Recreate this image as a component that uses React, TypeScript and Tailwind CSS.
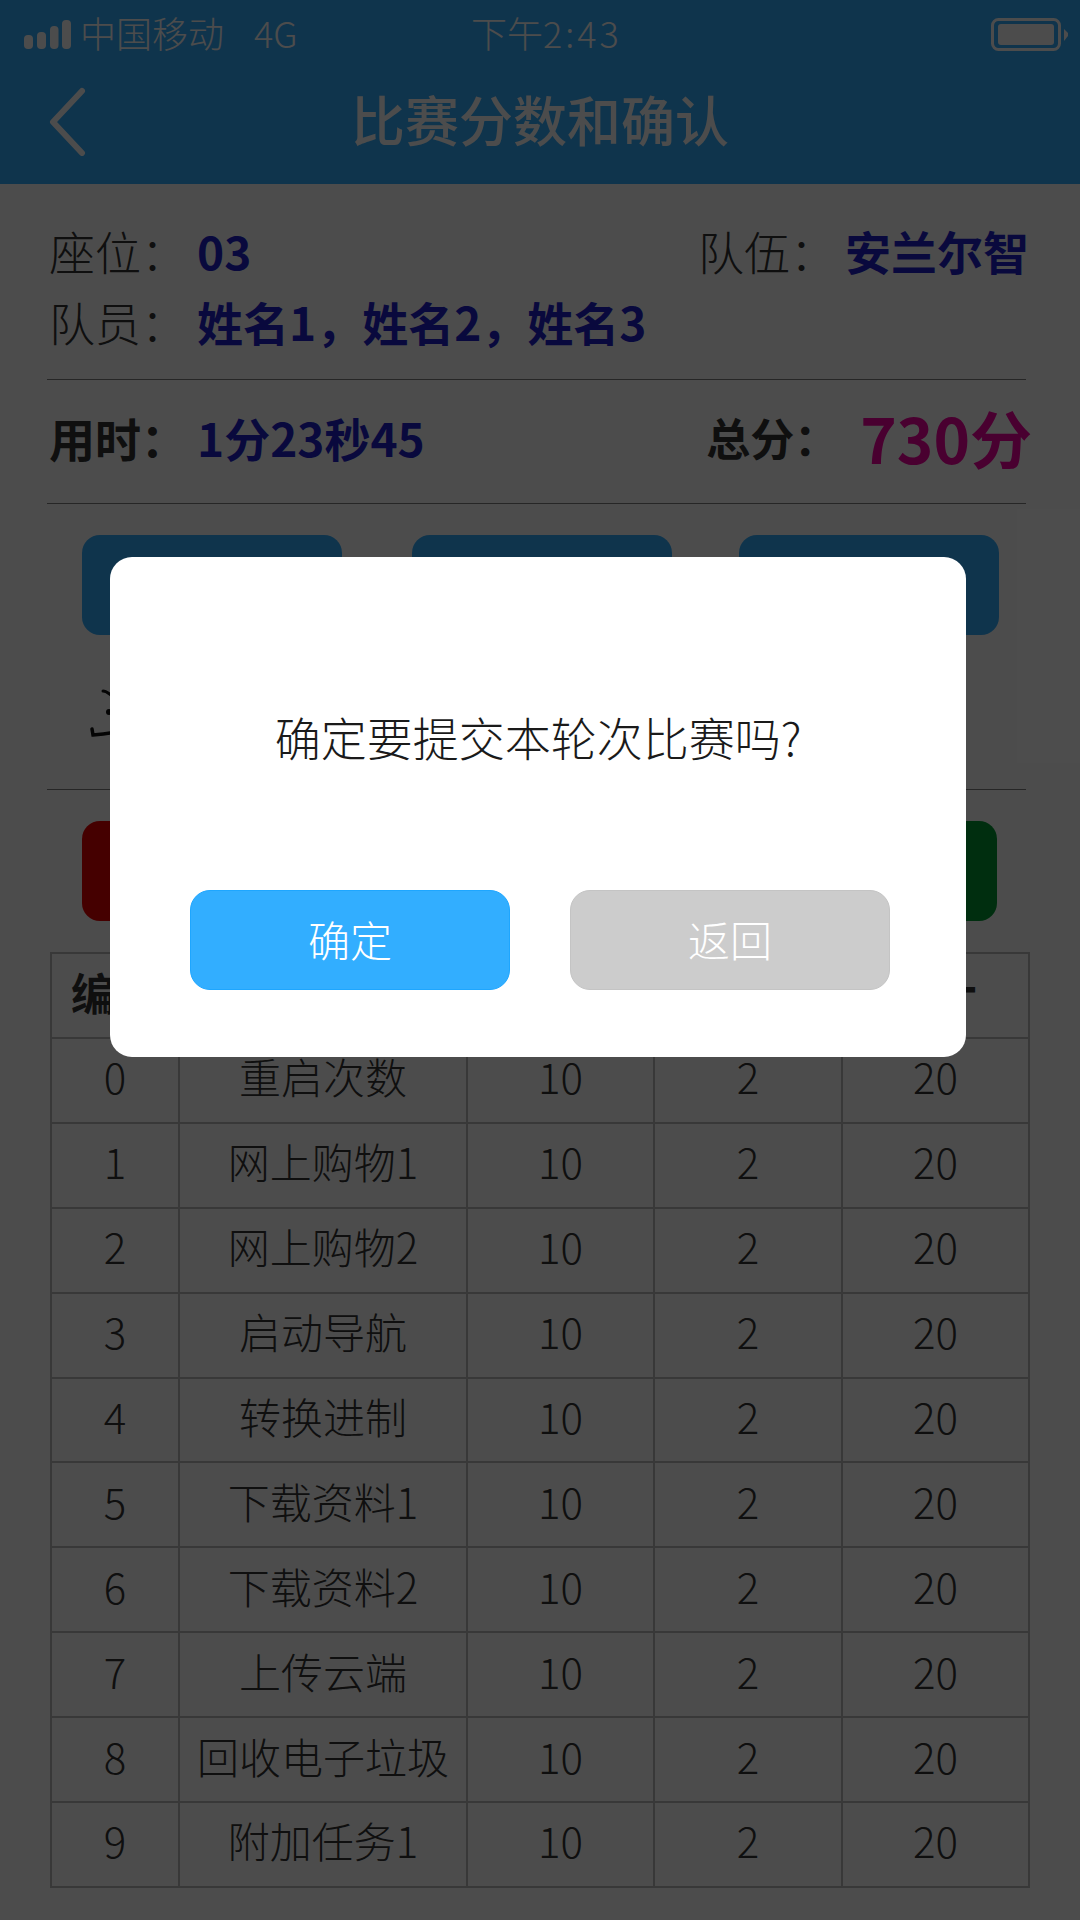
const rows = [
  ["0", "重启次数"],
  ["1", "网上购物1"],
  ["2", "网上购物2"],
  ["3", "启动导航"],
  ["4", "转换进制"],
  ["5", "下载资料1"],
  ["6", "下载资料2"],
  ["7", "上传云端"],
  ["8", "回收电子垃圾"],
  ["9", "附加任务1"],
];

const StatusBar = () => (
  <div className="flex h-[64px] items-center text-[36px] font-light leading-none text-white">
    <svg width="47" height="29" viewBox="0 0 47 29" fill="white" className="ml-[24px] mt-[4px]">
      <rect x="0" y="15" width="9" height="14" rx="4" />
      <rect x="13" y="12" width="9" height="17" rx="4" />
      <rect x="26" y="6" width="8.5" height="23" rx="4" />
      <rect x="38" y="0" width="9" height="29" rx="4" />
    </svg>
    <span className="ml-[9px] w-[174px]">中国移动</span>
    <span className="w-[217px]">4G</span>
    <span>
      下午<span className="tracking-[3px]">2:43</span>
    </span>
    <svg width="77" height="33" viewBox="0 0 77 33" fill="none" className="ml-auto mr-[12px] mt-[4px]">
      <rect x="1.5" y="1.5" width="67" height="30" rx="6" stroke="white" strokeWidth="3" />
      <rect x="7" y="6" width="56" height="21" rx="3" fill="white" />
      <path d="M73 11l4 4v3l-4 5z" fill="white" />
    </svg>
  </div>
);

const NavBar = () => (
  <div className="relative flex h-[120px] items-center justify-center">
    <svg width="40" height="70" viewBox="0 0 40 70" fill="none" className="absolute left-[47px] top-[22px]">
      <path d="M35 5L6 36l29 31" stroke="white" strokeWidth="6" strokeLinecap="round" strokeLinejoin="round" />
    </svg>
    <h1 className="pb-[10px] text-[54px] font-medium leading-none text-white">比赛分数和确认</h1>
  </div>
);

const App = () => {
  return (
    <div className="relative h-[1920px] w-[1080px] overflow-hidden bg-white font-['Noto_Sans_CJK_SC',sans-serif] text-[#333]">
      <header className="h-[184px] bg-[#32aeff]">
        <StatusBar />
        <NavBar />
      </header>

      <section className="px-[47px] pt-[30px]">
        <div className="flex h-[71px] items-center pl-[2px] pr-[4px] text-[46px] leading-none">
          <span className="w-[148px] font-light">座位：</span>
          <span className="font-bold text-[#1f1fcc]">03</span>
          <span className="ml-auto w-[147px] font-light">队伍：</span>
          <span className="font-bold text-[#1f1fcc]">安兰尔智</span>
        </div>
        <div className="flex h-[71px] items-center pl-[2px] text-[46px] leading-none">
          <span className="w-[148px] font-light">队员：</span>
          <span className="font-bold text-[#1f1fcc]">姓名1，姓名2，姓名3</span>
        </div>
        <div className="mr-[7px] mt-[23px] h-px bg-[#808080]" />
        <div className="flex h-[123px] items-center pb-[10px] pl-[2px] pr-[1px] leading-none">
          <span className="w-[148px] text-[46px] font-bold">用时：</span>
          <span className="text-[46px] font-bold text-[#1f1fcc]">1分23秒45</span>
          <span className="ml-auto w-[154px] text-[44px] font-bold">总分：</span>
          <span className="text-[62px] font-bold text-[#f600a0]">730分</span>
        </div>
        <div className="mr-[7px] h-px bg-[#808080]" />
      </section>

      <section className="mt-[31px] flex pl-[82px] pr-[81px]">
        <button className="mr-[70px] h-[100px] w-[260px] rounded-[18px] bg-[#32aeff]" />
        <button className="h-[100px] w-[260px] rounded-[18px] bg-[#32aeff]" />
        <button className="ml-auto h-[100px] w-[260px] rounded-[18px] bg-[#32aeff]" />
      </section>

      <section className="px-[47px]">
        {/* handwritten signature, most of it sits behind the dialog */}
        <div className="flex h-[154px] items-center pl-[38px]">
          <svg width="120" height="60" viewBox="0 0 120 60" fill="none" stroke="#111" strokeLinecap="round">
            <path d="M18 9c3 0 5 2 8 4" strokeWidth="3" />
            <circle cx="24" cy="30" r="3" fill="#111" stroke="none" />
            <path d="M7 47l1 6c14-1 30-4 46-8" strokeWidth="3.5" />
          </svg>
        </div>
        <div className="mr-[7px] h-px bg-[#808080]" />
      </section>

      <section className="mt-[31px] flex justify-between pl-[82px] pr-[83px]">
        <button className="h-[100px] w-[400px] rounded-[18px] bg-[#e60000]" />
        <button className="h-[100px] w-[400px] rounded-[18px] bg-[#009933]" />
      </section>

      <table className="ml-[50px] mt-[31px] w-[978px] table-fixed border-collapse border-2 border-[#bbb] text-center text-[42px] leading-none">
        <colgroup>
          <col className="w-[128px]" />
          <col className="w-[288px]" />
          <col className="w-[187px]" />
          <col className="w-[188px]" />
          <col className="w-[187px]" />
        </colgroup>
        <thead>
          <tr className="h-[85px] text-[44px]">
            <th className="border-2 border-[#bbb] pb-[8px] font-bold">编号</th>
            <th className="border-2 border-[#bbb]" />
            <th className="border-2 border-[#bbb]" />
            <th className="border-2 border-[#bbb]" />
            <th className="border-2 border-[#bbb] pb-[8px] pr-[6px] font-bold">小计</th>
          </tr>
        </thead>
        <tbody className="font-light">
          {rows.map(([id, name]) => (
            <tr className="h-[84.9px]" key={id}>
              <td className="border-2 border-[#bbb] pb-[8px]">{id}</td>
              <td className="border-2 border-[#bbb] pb-[8px]">{name}</td>
              <td className="border-2 border-[#bbb] pb-[8px]">10</td>
              <td className="border-2 border-[#bbb] pb-[8px]">2</td>
              <td className="border-2 border-[#bbb] pb-[8px]">20</td>
            </tr>
          ))}
        </tbody>
      </table>

      {/* dim layer with the confirm dialog */}
      <div className="absolute inset-0 bg-black/70 pl-[110px] pt-[557px]">
        <div className="h-[500px] w-[856px] rounded-[22px] bg-white pt-[153px]">
          <p className="text-center text-[46px] font-light leading-[52px] text-[#1a1a1a]">
            确定要提交本轮次比赛吗?
          </p>
          <div className="mt-[128px] flex gap-[60px] pl-[80px]">
            <button className="h-[100px] w-[320px] rounded-[20px] border border-[#1ea6ff] bg-[#32aeff] pb-[3px] text-[42px] font-light text-white">
              确定
            </button>
            <button className="h-[100px] w-[320px] rounded-[20px] border border-[#c4c4c4] bg-[#ccc] pb-[3px] text-[42px] font-light text-white">
              返回
            </button>
          </div>
        </div>
      </div>
    </div>
  );
};

export default App;
